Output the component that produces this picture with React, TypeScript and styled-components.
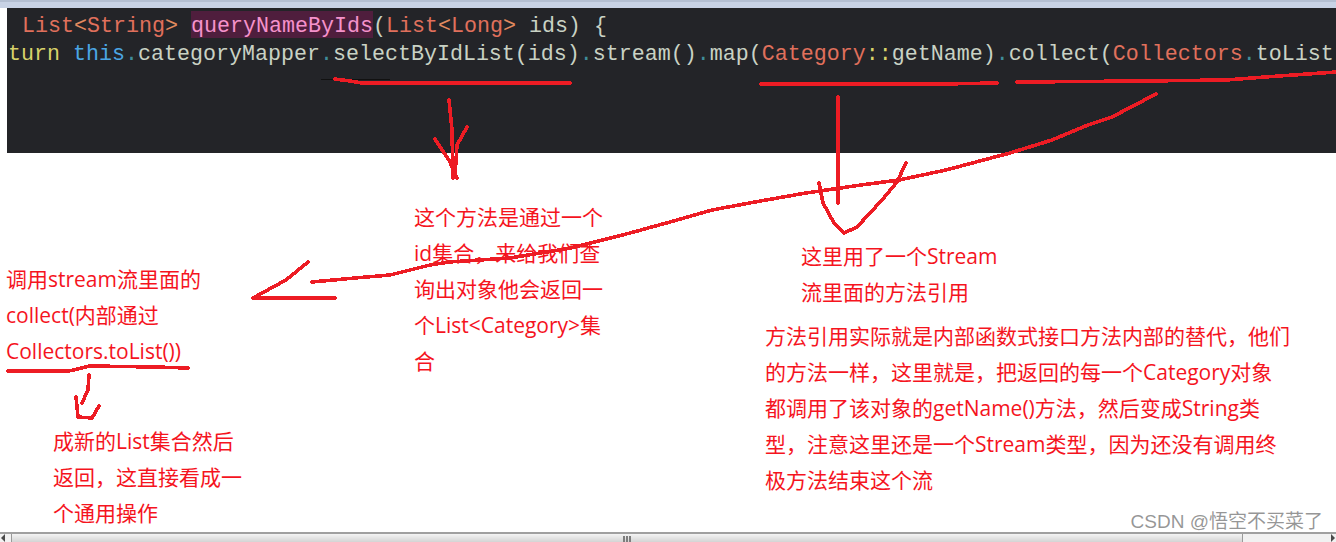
import styled, { createGlobalStyle } from "styled-components";

const GlobalStyle = createGlobalStyle`
  html, body {
    margin: 0;
    padding: 0;
    background: #ffffff;
  }
`;

const Page = styled.div`
  position: relative;
  display: flex;
  flex-direction: column;
  width: 1336px;
  height: 542px;
  overflow: hidden;
  background: #ffffff;
`;

const TopStrip = styled.div`
  flex: none;
  height: 8px;
  box-sizing: border-box;
  border-top: 2px solid #b4bfd2;
  background: #c8d2e5;
`;

const CodePanel = styled.div`
  flex: none;
  height: 145px;
  margin-left: 7px;
  padding-top: 5px;
  box-sizing: border-box;
  background: #232428;
  font-family: "Liberation Mono", monospace;
  font-size: 21.67px;
  line-height: 28px;
  white-space: pre;
  overflow: hidden;
`;

const CodeLine = styled.div<{ $indent?: number }>`
  height: 28px;
  padding-left: ${(p) => p.$indent ?? 1}px;
`;

const Token = styled.span<{ $color: string }>`
  color: ${(p) => p.$color};
`;

const Selected = styled.span`
  display: inline-block;
  height: 25px;
  background: #4f1e3d;
  box-shadow: 0 -2px 0 #4f1e3d;
  color: #f592cb;
`;

const Canvas = styled.div`
  position: relative;
  flex: 1;
`;

const Note = styled.div<{ $left: number; $top: number }>`
  position: absolute;
  left: ${(p) => p.$left}px;
  top: ${(p) => p.$top}px;
  font-family: "Open Sans", "Noto Sans CJK SC", sans-serif;
  font-size: 21px;
  line-height: 36px;
  color: #f5141e;
  white-space: nowrap;
`;

const Watermark = styled.div`
  position: absolute;
  right: 13px;
  bottom: 8px;
  font-family: "Liberation Sans", "Noto Sans CJK SC", sans-serif;
  font-size: 19px;
  line-height: 24px;
  color: rgba(110, 110, 110, 0.72);
  z-index: 3;
  white-space: nowrap;
`;

const Ink = styled.svg`
  position: absolute;
  left: 0;
  top: 0;
  z-index: 2;
  pointer-events: none;
  fill: none;
  stroke: #ed1c24;
  stroke-width: 3.6;
  stroke-linecap: round;
  stroke-linejoin: round;
  shape-rendering: crispEdges;
`;

const ScrollBar = styled.div`
  flex: none;
  display: flex;
  height: 10px;
  box-sizing: border-box;
  border-top: 2px solid #a0a0a0;
  background: #f1f1f1;
`;

const ScrollButton = styled.div<{ $width: number; $flip?: boolean }>`
  flex: none;
  display: flex;
  align-items: center;
  justify-content: ${(p) => (p.$flip ? "flex-end" : "flex-start")};
  width: ${(p) => p.$width}px;
  padding: 0 1px;
  box-sizing: border-box;

  &::before {
    content: "";
    border-style: solid;
    border-width: 4px ${(p) => (p.$flip ? "0" : "4px")} 4px ${(p) => (p.$flip ? "4px" : "0")};
    border-color: transparent #4a4a4a;
  }
`;

const ScrollThumb = styled.div`
  flex: none;
  display: flex;
  justify-content: center;
  gap: 1px;
  width: 1232px;
  box-sizing: border-box;
  border-left: 1px solid #9a9a9a;
  border-right: 1px solid #9a9a9a;
  background: linear-gradient(#f4f4f4, #d4d4d4);
`;

const ScrollTrack = styled.div`
  flex: 1;
`;

const Grip = styled.span`
  width: 2px;
  margin-top: 2px;
  background: #7e7e7e;
`;

const salmon = "#e0705c";
const orange = "#e28a5f";
const plain = "#c9d2c4";
const teal = "#3f8c9a";
const yellow = "#d8d26a";
const blue = "#4ba6e4";

const strokes = [
  "M335 79 L350 81 L362 83 L570 83",
  "M449 100 L452 130 L453 178",
  "M467 127 L457 145 L455 176",
  "M435 139 L449 160 L457 178",
  "M761 84 L942 84 L997 83",
  "M1017 82 L1144 81 L1226 80 L1265 77 L1336 72",
  "M838 97 L838 203",
  "M1156 94 L1133 106 L1112 117 L1088 125 L1052 140 L1010 153 L976 162 L946 170 L899 180 L861 185 L806 193 L755 202 L712 210 L670 222 L630 233 L571 248 L510 258 L449 262 L430 265 L390 275 L355 278 L312 282",
  "M308 262 L286 280 L253 298 L335 298",
  "M819 183 L823 203 L834 223 L844 233 L857 227 L882 200 L897 182 L906 163",
  "M8 371 L69 371 L90 366 L155 367 L188 368",
  "M89 375 L88 390 L82 403",
  "M76 397 L78 417 L92 418 L99 406",
];

const App = () => {
  return (
    <Page>
      <GlobalStyle />
      <TopStrip />
      <CodePanel>
        <CodeLine $indent={15}>
          <Token $color={salmon}>List</Token>
          <Token $color={orange}>&lt;</Token>
          <Token $color={salmon}>String</Token>
          <Token $color={orange}>&gt;</Token>{" "}
          <Selected>queryNameByIds</Selected>
          <Token $color={plain}>(</Token>
          <Token $color={salmon}>List</Token>
          <Token $color={orange}>&lt;</Token>
          <Token $color={salmon}>Long</Token>
          <Token $color={orange}>&gt;</Token>
          <Token $color={plain}> ids) {"{"}</Token>
        </CodeLine>
        <CodeLine>
          <Token $color={yellow}>turn </Token>
          <Token $color={blue}>this</Token>
          <Token $color={teal}>.</Token>
          <Token $color={plain}>categoryMapper</Token>
          <Token $color={teal}>.</Token>
          <Token $color={plain}>selectByIdList(ids)</Token>
          <Token $color={teal}>.</Token>
          <Token $color={plain}>stream()</Token>
          <Token $color={teal}>.</Token>
          <Token $color={plain}>map(</Token>
          <Token $color={salmon}>Category</Token>
          <Token $color={yellow}>::</Token>
          <Token $color={plain}>getName)</Token>
          <Token $color={teal}>.</Token>
          <Token $color={plain}>collect(</Token>
          <Token $color={salmon}>Collectors</Token>
          <Token $color={teal}>.</Token>
          <Token $color={plain}>toList</Token>
        </CodeLine>
      </CodePanel>
      <Canvas>
        <Note $left={414} $top={46}>
          这个方法是通过一个
          <br />
          id集合，来给我们查
          <br />
          询出对象他会返回一
          <br />
          个List&lt;Category&gt;集
          <br />合
        </Note>
        <Note $left={6} $top={108}>
          调用stream流里面的
          <br />
          collect(内部通过
          <br />
          Collectors.toList())
        </Note>
        <Note $left={53} $top={270}>
          成新的List集合然后
          <br />
          返回，这直接看成一
          <br />
          个通用操作
        </Note>
        <Note $left={801} $top={85}>
          这里用了一个Stream
          <br />
          流里面的方法引用
        </Note>
        <Note $left={765} $top={165}>
          方法引用实际就是内部函数式接口方法内部的替代，他们
          <br />
          的方法一样，这里就是，把返回的每一个Category对象
          <br />
          都调用了该对象的getName()方法，然后变成String类
          <br />
          型，注意这里还是一个Stream类型，因为还没有调用终
          <br />
          极方法结束这个流
        </Note>
      </Canvas>
      <ScrollBar>
        <ScrollButton $width={11} />
        <ScrollThumb>
          <Grip />
          <Grip />
          <Grip />
        </ScrollThumb>
        <ScrollTrack />
        <ScrollButton $width={10} $flip />
      </ScrollBar>
      <Ink width="1336" height="542" viewBox="0 0 1336 542">
        <path d="M320 79 L390 80" stroke="#111111" strokeWidth="1" />
        {strokes.map((d) => (
          <path key={d} d={d} />
        ))}
      </Ink>
      <Watermark>CSDN @悟空不买菜了</Watermark>
    </Page>
  );
};

export default App;
